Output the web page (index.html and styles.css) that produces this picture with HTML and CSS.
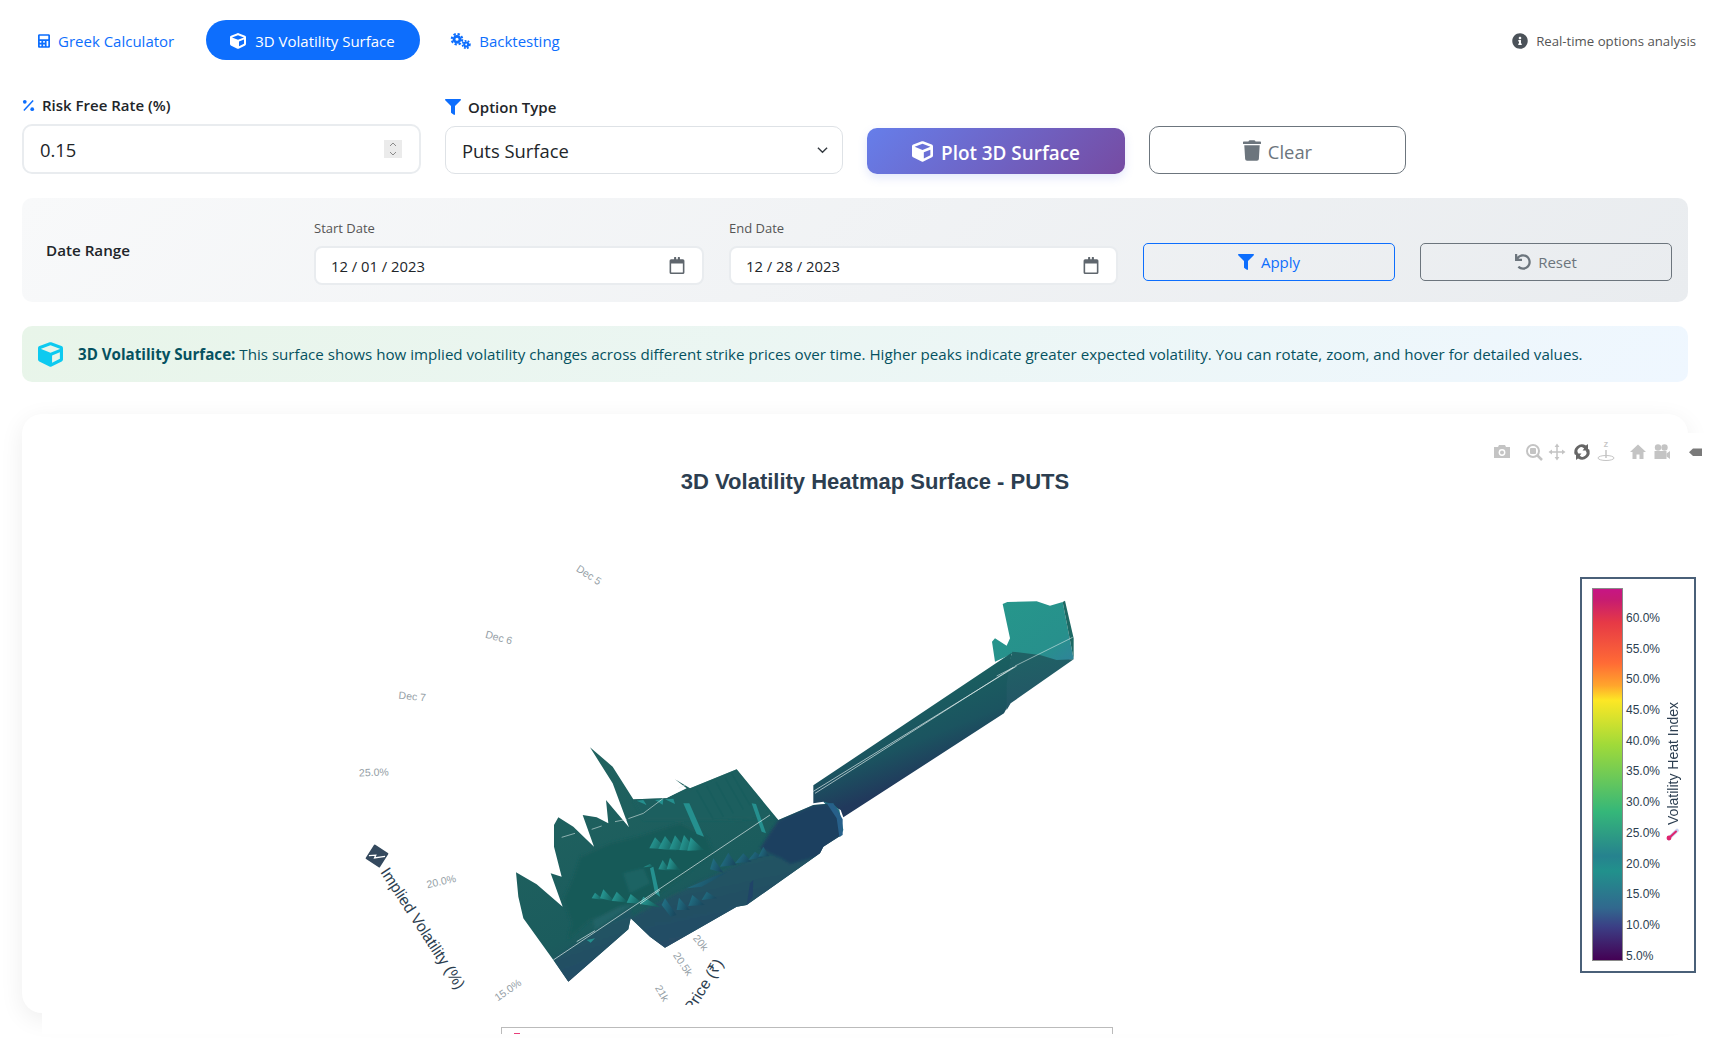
FILE: index.html
```html
<!DOCTYPE html>
<html lang="en">
<head>
<meta charset="utf-8">
<title>3D Volatility Surface</title>
<link rel="stylesheet" href="styles.css">
</head>
<body>
<svg class="defs" width="0" height="0" aria-hidden="true">
  <defs>
    <symbol id="i-cube" viewBox="0 0 512 512"><path d="M239.1 6.3l-208 78c-18.7 7-31.1 25-31.1 45v225.1c0 18.2 10.3 34.8 26.5 42.9l208 104c13.5 6.8 29.4 6.8 42.9 0l208-104c16.3-8.1 26.5-24.8 26.5-42.9V129.3c0-20-12.4-37.9-31.1-44.9l-208-78C262 2.2 250 2.2 239.1 6.3zM256 68.4l192 72v1.1l-192 78-192-78v-1.1l192-72zm32 356V275.5l160-65v133.9l-160 80z"/></symbol>
    <symbol id="i-filter" viewBox="0 0 512 512"><path d="M487.976 0H24.028C2.71 0-8.047 25.866 7.058 40.971L192 225.941V432c0 7.831 3.821 15.17 10.237 19.662l80 55.98C298.02 518.69 320 507.493 320 487.98V225.941l184.947-184.97C520.021 25.896 509.338 0 487.976 0z"/></symbol>
    <symbol id="i-calendar" viewBox="0 0 448 512"><path d="M148 0h40a12 12 0 0 1 12 12v52h48V12a12 12 0 0 1 12-12h40a12 12 0 0 1 12 12v52h88a48 48 0 0 1 48 48v352a48 48 0 0 1-48 48H48a48 48 0 0 1-48-48V112a48 48 0 0 1 48-48h88V12a12 12 0 0 1 12-12zM48 192v256a16 16 0 0 0 16 16h320a16 16 0 0 0 16-16V192z"/></symbol>
  </defs>
</svg>
<main class="page">
  <header class="topbar">
    <nav class="tabs">
      <a class="tab">
        <svg class="tab-icon calc" viewBox="0 0 448 512"><path d="M400 0H48C22.4 0 0 22.4 0 48v416c0 25.6 22.4 48 48 48h352c25.6 0 48-22.4 48-48V48c0-25.6-22.4-48-48-48zM128 435.2c0 6.4-6.4 12.8-12.8 12.8H76.8c-6.4 0-12.8-6.4-12.8-12.8v-38.4c0-6.4 6.4-12.8 12.8-12.8h38.4c6.4 0 12.8 6.4 12.8 12.8v38.4zm0-128c0 6.4-6.4 12.8-12.8 12.8H76.8c-6.4 0-12.8-6.4-12.8-12.8v-38.4c0-6.4 6.4-12.8 12.8-12.8h38.4c6.4 0 12.8 6.4 12.8 12.8v38.4zm128 128c0 6.4-6.4 12.8-12.8 12.8h-38.4c-6.4 0-12.8-6.4-12.8-12.8v-38.4c0-6.4 6.4-12.8 12.8-12.8h38.4c6.4 0 12.8 6.4 12.8 12.8v38.4zm0-128c0 6.4-6.4 12.8-12.8 12.8h-38.4c-6.4 0-12.8-6.4-12.8-12.8v-38.4c0-6.4 6.4-12.8 12.8-12.8h38.4c6.4 0 12.8 6.4 12.8 12.8v38.4zm128 128c0 6.4-6.4 12.8-12.8 12.8h-38.4c-6.4 0-12.8-6.4-12.8-12.8V268.8c0-6.4 6.4-12.8 12.8-12.8h38.4c6.4 0 12.8 6.4 12.8 12.8v166.4zm0-256c0 6.4-6.4 12.8-12.8 12.8H76.8c-6.4 0-12.8-6.4-12.8-12.8V76.8C64 70.4 70.4 64 76.8 64h294.4c6.4 0 12.8 6.4 12.8 12.8v102.4z"/></svg>
        Greek Calculator
      </a>
      <a class="tab tab-active">
        <svg class="tab-icon"><use href="#i-cube"/></svg>
        3D Volatility Surface
      </a>
      <a class="tab">
        <svg class="tab-icon gears" viewBox="0 0 24 18">
          <g class="gear-big"><circle cx="8" cy="7" r="3.4"/><circle class="teeth" cx="8" cy="7" r="6"/></g>
          <g class="gear-small"><circle cx="18.5" cy="13" r="2.3"/><circle class="teeth-s" cx="18.5" cy="13" r="4.2"/></g>
        </svg>
        Backtesting
      </a>
    </nav>
    <p class="status">
      <svg class="status-icon" viewBox="0 0 512 512"><path d="M256 8C119 8 8 119.083 8 256c0 136.997 111 248 248 248s248-111.003 248-248C504 119.083 393 8 256 8zm0 110c23.196 0 42 18.804 42 42s-18.804 42-42 42-42-18.804-42-42 18.804-42 42-42zm56 254c0 6.627-5.373 12-12 12h-88c-6.627 0-12-5.373-12-12v-24c0-6.627 5.373-12 12-12h12v-64h-12c-6.627 0-12-5.373-12-12v-24c0-6.627 5.373-12 12-12h64c6.627 0 12 5.373 12 12v100h12c6.627 0 12 5.373 12 12v24z"/></svg>
      Real-time options analysis
    </p>
  </header>

  <section class="controls">
    <div class="field">
      <label class="field-label">
        <svg class="pct-icon" viewBox="0 0 14 14"><path d="M2 12.5 12 1.5" /><circle cx="3" cy="3" r="2"/><circle cx="11" cy="11" r="2"/></svg>
        Risk Free Rate (%)
      </label>
      <div class="input-box input-risk">
        <span>0.15</span>
        <span class="spinner">
          <svg viewBox="0 0 10 18"><path d="M2 6 5 3l3 3M2 12l3 3 3-3"/></svg>
        </span>
      </div>
    </div>
    <div class="field">
      <label class="field-label">
        <svg class="filter-icon"><use href="#i-filter"/></svg>
        Option Type
      </label>
      <div class="input-box input-select">
        <span>Puts Surface</span>
        <svg class="chevron" viewBox="0 0 12 8"><path d="M1 1.5 6 6.5l5-5"/></svg>
      </div>
    </div>
    <button class="btn-plot">
      <svg class="btn-icon"><use href="#i-cube"/></svg>
      <span>Plot 3D Surface</span>
    </button>
    <button class="btn-clear">
      <svg class="btn-icon trash" viewBox="0 0 448 512"><path d="M432 32H312l-9.4-18.7A24 24 0 0 0 281.1 0H166.8a23.72 23.72 0 0 0-21.4 13.3L136 32H16A16 16 0 0 0 0 48v32a16 16 0 0 0 16 16h416a16 16 0 0 0 16-16V48a16 16 0 0 0-16-16zM53.2 467a48 48 0 0 0 47.9 45h245.8a48 48 0 0 0 47.9-45L416 128H32z"/></svg>
      <span>Clear</span>
    </button>
  </section>

  <section class="date-panel">
    <strong class="date-title">Date Range</strong>
    <div class="date-field">
      <span class="date-label">Start Date</span>
      <div class="date-input"><span>12 / 01 / 2023</span><svg class="cal"><use href="#i-calendar"/></svg></div>
    </div>
    <div class="date-field">
      <span class="date-label">End Date</span>
      <div class="date-input"><span>12 / 28 / 2023</span><svg class="cal"><use href="#i-calendar"/></svg></div>
    </div>
    <button class="btn-small btn-apply"><svg class="small-icon"><use href="#i-filter"/></svg>Apply</button>
    <button class="btn-small btn-reset">
      <svg class="small-icon" viewBox="0 0 512 512"><path d="M212.333 224.333H12c-6.627 0-12-5.373-12-12V12C0 5.373 5.373 0 12 0h48c6.627 0 12 5.373 12 12v78.112C117.773 39.279 184.26 7.47 258.175 8.007c136.906.994 246.448 111.623 246.157 248.532C504.041 393.258 393.12 504 256.333 504c-64.089 0-122.496-24.313-166.51-64.215-5.099-4.622-5.334-12.554-.467-17.42l33.967-33.967c4.474-4.474 11.662-4.717 16.401-.525C170.76 415.336 211.58 432 256.333 432c97.268 0 176-78.716 176-176 0-97.267-78.716-176-176-176-58.496 0-110.28 28.476-142.274 72.333h98.274c6.627 0 12 5.373 12 12v48c0 6.627-5.373 12-12 12z"/></svg>
      Reset
    </button>
  </section>

  <section class="info">
    <svg class="info-icon"><use href="#i-cube"/></svg>
    <p><strong>3D Volatility Surface:</strong> This surface shows how implied volatility changes across different strike prices over time. Higher peaks indicate greater expected volatility. You can rotate, zoom, and hover for detailed values.</p>
  </section>

  <section class="card"></section>

  <div class="plot">
    <svg class="scene" viewBox="42 433 1670 572" width="1670" height="572">
      <defs>
        <linearGradient id="g-body" x1="0.15" y1="0.1" x2="0.75" y2="1">
          <stop offset="0" stop-color="#20625f"/><stop offset=".55" stop-color="#1b5c5d"/><stop offset="1" stop-color="#24405f"/>
        </linearGradient>
        <linearGradient id="g-under" x1="0" y1="0" x2="0.35" y2="1">
          <stop offset="0" stop-color="#1b5a60"/><stop offset="1" stop-color="#264a66"/>
        </linearGradient>
        <linearGradient id="g-shaft" x1="0.42" y1="0.3" x2="0.62" y2="0.72">
          <stop offset="0" stop-color="#1a5f60"/><stop offset=".55" stop-color="#1b5460"/><stop offset="1" stop-color="#21395c"/>
        </linearGradient>
        <linearGradient id="g-section" x1="0.2" y1="0" x2="0.5" y2="1">
          <stop offset="0" stop-color="#1f6365"/><stop offset="1" stop-color="#245466"/>
        </linearGradient>
        <linearGradient id="g-head" x1="0" y1="0" x2="1" y2="1">
          <stop offset="0" stop-color="#26978b"/><stop offset=".72" stop-color="#27908c"/><stop offset="1" stop-color="#30839a"/>
        </linearGradient>
        <linearGradient id="g-tooth" x1="0" y1="0" x2="1" y2="0.3">
          <stop offset="0" stop-color="#2ba5a0"/><stop offset="1" stop-color="#15615f"/>
        </linearGradient>
        <linearGradient id="g-tooth-blue" x1="0" y1="0" x2="1" y2="0.3">
          <stop offset="0" stop-color="#22768a"/><stop offset="1" stop-color="#1a4a60"/>
        </linearGradient>
        <filter id="soft" x="-10%" y="-10%" width="120%" height="120%"><feGaussianBlur stdDeviation="5"/></filter>
        <clipPath id="body-clip">
          <polygon points="108,457 170,493 248,560 212,460 245,470 222,380 222,315 235,292 280,320 342,380 308,285 350,292 385,310 378,240 447,322 398,190 330,82 398,140 460,238 560,235 620,205 585,178 630,205 770,148 895,300 1000,255 1060,250 1085,300 1085,345 1030,380 1020,400 800,555 770,560 555,683 510,650 452,595 445,628 265,785 220,720 130,595 115,530"/>
        </clipPath>
      </defs>

      <!-- far end of the surface, zoomed coordinates at 3x -->
      <g transform="translate(780 580) scale(.33333)">
        <polygon fill="url(#g-head)" points="668,72 682,66 770,64 810,77 848,66 881,238 830,245 780,232 700,220 645,245 636,185 645,175 680,197 690,175"/>
        <polygon fill="#1d6863" points="848,66 855,62 881,175 881,238 868,170"/>
        <polygon fill="url(#g-section)" points="697,215 780,225 830,240 881,238 692,370 680,390 665,320"/>
        <polygon fill="url(#g-shaft)" points="100,616 695,218 680,312 680,385 672,400 190,712 182,690 130,665 100,670"/>
        <polygon fill="#1f6f80" points="130,665 160,672 178,690 190,750 180,772 160,700"/>
      </g>

      <!-- near part of the surface -->
      <g transform="translate(480 720) scale(.33333)">
        <polygon fill="url(#g-body)" points="108,457 170,493 248,560 212,460 245,470 222,380 222,315 235,292 280,320 342,380 308,285 350,292 385,310 378,240 447,322 398,190 330,82 398,140 460,238 560,235 620,205 585,178 630,205 770,148 895,300 1000,255 1060,250 1085,300 1085,345 1030,380 1020,400 800,555 770,560 555,683 510,650 452,595 445,628 265,785 220,720 130,595 115,530"/>
        <g clip-path="url(#body-clip)">
          <g filter="url(#soft)">
            <polygon fill="#1a5f5e" points="460,240 620,210 770,148 880,295 700,300 620,300 490,300"/>
            <polygon fill="#155a59" points="280,470 300,410 390,370 470,350 600,310 680,350 700,400 540,520 330,600 262,660 275,610 250,540"/>
            <polygon fill="#1f6363" points="430,460 490,445 510,490 450,520"/>
            <polygon fill="#246468" points="340,600 420,560 460,550 345,630"/>
            <polygon fill="url(#g-under)" points="220,720 450,565 460,600 445,640 265,800"/>
            <polygon fill="url(#g-under)" points="452,595 540,545 800,420 1020,340 1040,380 1030,410 800,570 770,575 555,700 500,650"/>
            <polygon fill="#1f3f60" points="895,300 1000,255 1045,250 1090,300 1090,345 1040,380 1030,405 930,432 905,415 880,405 840,385"/>
          </g>
        </g>
        <polygon fill="#204468" points="810,490 820,480 818,530 800,555"/>
        <polygon fill="#27608a" points="1040,250 1060,250 1088,298 1088,345 1078,350 1070,295"/>
        <!-- ribbed block -->
        <g class="ribs">
          <path d="M650 210 700 298M680 198 730 290M708 186 760 280M735 172 790 268M755 160 810 255"/>
        </g>
        <!-- teeth -->
        <g fill="url(#g-tooth)">
          <polygon points="525,352 560,388 508,385"/><polygon points="555,348 590,392 535,386"/><polygon points="585,346 622,392 568,388"/><polygon points="612,345 650,392 598,390"/><polygon points="632,352 672,390 622,392"/>
          <polygon points="548,420 570,452 535,448"/><polygon points="570,413 600,450 560,448"/>
          <polygon points="510,432 520,440 490,442"/>
          <polygon points="345,518 372,540 335,535"/><polygon points="370,508 405,545 360,535"/><polygon points="410,515 445,548 395,542"/><polygon points="452,522 490,552 440,548"/><polygon points="490,530 540,562 480,552"/>
        </g>
        <g fill="url(#g-tooth-blue)">
          <polygon points="555,535 590,585 572,590 545,555"/><polygon points="597,533 630,570 590,570"/><polygon points="637,525 675,555 625,558"/><polygon points="680,515 712,535 665,540"/>
          <polygon points="700,415 730,458 690,448"/><polygon points="745,398 770,435 720,440"/><polygon points="790,400 815,425 765,430"/><polygon points="825,395 848,412 805,420"/><polygon points="850,380 868,408 835,410"/>
          <polygon points="620,505 700,470 745,455 665,500"/>
        </g>
        <g fill="#25908f">
          <polygon points="510,445 520,440 540,530 525,520"/>
          <polygon points="610,250 628,250 672,350 650,342"/>
          <polygon points="815,250 828,252 858,340 845,335"/>
          <polygon points="470,242 500,255 490,240"/><polygon points="525,240 548,254 550,238"/><polygon points="555,238 585,252 580,236"/>
          <polygon points="320,660 345,655 332,668"/>
        </g>
        <!-- wireframe lines -->
        <g class="wire">
          <path d="M220 720 870 285"/>
          <path d="M290 665 345 632M480 552 540 510"/>
          <path class="thin" d="M245 352 285 340M335 328 365 318M405 305 440 298M445 296 490 280M490 280 550 235M595 205 615 195"/>
        </g>
      </g>
      <g transform="translate(780 580) scale(.33333)">
        <g class="wire">
          <path d="M100 634 710 258"/>
          <path d="M105 640 700 262"/>
          <path class="thin" d="M650 288 705 260"/>
          <path class="thin" d="M705 258 878 172"/>
        </g>
      </g>

      <!-- axis ticks -->
      <g class="ticks">
        <text transform="translate(587 578) rotate(33)">Dec 5</text>
        <text transform="translate(498 641) rotate(15)">Dec 6</text>
        <text transform="translate(412 700) rotate(5)">Dec 7</text>
        <text transform="translate(374 776) rotate(-2)">25.0%</text>
        <text transform="translate(442 885) rotate(-13)">20.0%</text>
        <text transform="translate(510 993) rotate(-35)">15.0%</text>
        <text transform="translate(698 945) rotate(50)">20k</text>
        <text transform="translate(680 966) rotate(56)">20.5k</text>
        <text transform="translate(659 995) rotate(60)">21k</text>
      </g>

      <!-- axis titles -->
      <text class="axis-title" transform="translate(380 872) rotate(57)">Implied Volatility (%)</text>
      <g transform="translate(377 856) rotate(33)">
        <rect x="-8.500" y="-8.500" width="17" height="17" rx="1" fill="#34495e"/>
        <path d="M-7 4-1.500 0-1 3 7-4" fill="none" stroke="#fff" stroke-width="1.300"/>
      </g>
      <text class="axis-title" text-anchor="end" transform="translate(724 963) rotate(-58)">Strike Price (₹)</text>

      <!-- chart title -->
      <text class="chart-title" x="875" y="489" text-anchor="middle">3D Volatility Heatmap Surface - PUTS</text>

      <!-- modebar -->
      <g class="modebar">
        <g transform="translate(1502 452)"><path d="M-8 -5h4l1-2h6l1 2h4v11h-16z"/><circle r="3.400" cy="0.500" fill="#fff"/><circle r="2" cy="0.500"/></g>
        <g transform="translate(1533 451)"><circle r="6" class="ring"/><rect x="-3" y="-3" width="6" height="6" rx="1"/><path class="line" d="M4 4 9 9"/></g>
        <g transform="translate(1557 452)"><path class="line2" d="M-7 0H7M0-7V7"/><path d="M0-8.500 2.400-5H-2.400zM0 8.500 2.400 5H-2.400zM-8.500 0-5 2.400V-2.400zM8.500 0 5 2.400V-2.400z"/></g>
        <g transform="translate(1582 452)" class="mode-dark"><path d="M-7 3A7.600 7.600 0 0 1 4-6.500L6-8V-1.500H0.500L2.200-3.400A3.500 3.500 0 0 0-3.500 1.500z"/><path d="M7 -3A7.600 7.600 0 0 1-4 6.500L-6 8V1.500H-0.500L-2.200 3.400A3.500 3.500 0 0 0 3.500-1.500z"/></g>
        <g transform="translate(1606 452)"><text class="mode-z" y="-5" text-anchor="middle">Z</text><path class="line2" d="M0-2V6"/><ellipse class="ring thin-ring" cy="6" rx="8" ry="2.500"/></g>
        <g transform="translate(1638 452)"><path d="M0-7.500-8 0H-5.500V7H-1.500V2.500H1.500V7H5.500V0H8z"/></g>
        <g transform="translate(1662 452)"><circle cx="-4" cy="-4.500" r="3.200"/><circle cx="2.500" cy="-4.500" r="3.200"/><rect x="-7.500" y="-1" width="12" height="8"/><path d="M4.500 1.500 8 -1V7L4.500 4.500z"/></g>
        <path class="mode-tag" d="M1693 448.500H1702V456H1693L1689 452.300z"/>
      </g>
    </svg>
    <div class="legend-strip"><span class="legend-dot"></span></div>

    <aside class="colorbar">
      <div class="bar"></div>
      <ul class="bar-ticks">
        <li>60.0%</li><li>55.0%</li><li>50.0%</li><li>45.0%</li><li>40.0%</li><li>35.0%</li>
        <li>30.0%</li><li>25.0%</li><li>20.0%</li><li>15.0%</li><li>10.0%</li><li>5.0%</li>
      </ul>
      <div class="bar-title">
        <svg class="thermo" viewBox="0 0 14 14"><path d="M2.500 11.500 11 3.500" stroke="#c8d0f0" stroke-width="3.600" stroke-linecap="round"/><path d="M2.500 11.500 10 4.500" stroke="#e0246e" stroke-width="2" stroke-linecap="round"/><circle cx="3" cy="11" r="2.400" fill="#e0246e"/></svg>
        <span>Volatility Heat Index</span>
      </div>
    </aside>
  </div>
</main>
</body>
</html>
```

FILE: styles.css
```css
* { box-sizing: border-box; }
html, body { margin: 0; height: 100%; }
body {
  background: #fff;
  color: #212529;
  font-family: "Open Sans", "Noto Sans", sans-serif;
  overflow: hidden;
}
.defs { position: absolute; }
.page { position: relative; height: 1060px; padding: 20px 16px 0 22px; }

.topbar { display: flex; justify-content: space-between; align-items: center; height: 40px; }
.tabs { display: flex; align-items: center; }
.tab {
  display: flex; align-items: center; height: 40px;
  color: #0d6efd; font-size: 15px; border-radius: 20px;
  padding: 2px 24px 0 16px; gap: 8px;
}
.tab:nth-child(2) { margin-left: 8px; width: 214px; padding: 2px 0 0 24px; gap: 9px; }
.tab:nth-child(3) { margin-left: 6px; padding-left: 24px; gap: 8px; }
.tab-active { background: #0d6efd; color: #fff; }
.tab-icon { width: 16px; height: 16px; fill: currentColor; flex: none; }
.tab-icon.calc { width: 12px; }
.tab-icon.gears { width: 21px; }
.gear-big circle { fill: none; stroke: #0d6efd; stroke-width: 3.2; }
.gear-big .teeth { stroke-width: 2.4; stroke-dasharray: 2.6 2.1; }
.gear-small circle { fill: none; stroke: #0d6efd; stroke-width: 2.4; }
.gear-small .teeth-s { stroke-width: 2; stroke-dasharray: 2 1.5; }
.status { margin: 0; padding-top: 2px; display: flex; align-items: center; gap: 8px; color: #555; font-size: 13.200px; }
.status-icon { width: 16px; height: 16px; fill: #4b5259; }

.controls {
  display: grid;
  grid-template-columns: 399px 398px 258px 257px;
  column-gap: 24px;
  align-items: end;
  height: 114px;
  margin-bottom: 24px;
  padding-top: 20px;
}
.field { display: flex; flex-direction: column; }
.field-label { display: flex; align-items: center; gap: 7px; font-size: 15px; font-weight: 600; color: #212529; height: 20px; margin-bottom: 9px; }
.pct-icon { width: 13px; height: 13px; fill: #0d6efd; stroke: #0d6efd; stroke-width: 1.6; }
.pct-icon circle { stroke: none; }
.filter-icon { width: 16px; height: 16px; fill: #0d6efd; }
.input-box {
  display: flex; justify-content: space-between; align-items: center;
  background: #fff; font-size: 18.400px; color: #212529; padding: 0 14px 0 16px;
}
.input-box > span:first-child { padding-top: 1px; }
.input-risk { height: 50px; border: 2px solid #e9ecef; border-radius: 10px; padding-right: 17px; }
.input-select { height: 48px; border: 1px solid #dee2e6; border-radius: 10px; }
.spinner { display: flex; width: 18px; height: 18px; background: #ebebeb; }
.spinner svg { width: 100%; height: 100%; fill: none; stroke: #8a8a8a; stroke-width: 1; }
.chevron { width: 11px; height: 8px; fill: none; stroke: #343a40; stroke-width: 1.500; }

button { font-family: inherit; cursor: pointer; }
.btn-plot {
  display: flex; align-items: center; justify-content: center; gap: 8px;
  height: 46px;
  color: #fff; font-size: 18.900px; font-weight: 600;
  border: 0; border-radius: 10px;
  background: linear-gradient(135deg, #667eea, #764ba2);
  box-shadow: 0 4px 10px rgba(102, 126, 234, .18);
}
.btn-plot span { padding-top: 3px; }
.btn-clear {
  display: flex; align-items: center; justify-content: center; gap: 7px;
  height: 48px;
  color: #6c757d; font-size: 18.400px;
  background: #fff; border: 1px solid #6c757d; border-radius: 10px;
}
.btn-clear span { padding-top: 2px; }
.btn-icon { width: 21px; height: 21px; fill: currentColor; }
.btn-icon.trash { width: 18px; }

.date-panel {
  display: grid;
  grid-template-columns: 243px 390px 389px 252px 252px;
  column-gap: 25px;
  align-items: end;
  height: 104px;
  padding: 0 16px 17px 24px;
  border-radius: 10px;
  background: linear-gradient(135deg, #f8f9fa, #e9ecef);
  width: 1666px;
}
.date-title { align-self: center; font-size: 15.200px; font-weight: 600; margin-top: 17px; }
.date-field { display: flex; flex-direction: column; gap: 9px; }
.date-label { font-size: 13px; color: #555; line-height: 18px; }
.date-input {
  display: flex; justify-content: space-between; align-items: center;
  height: 39px; padding: 0 17px 0 15px;
  background: #fff; border: 2px solid #e9ecef; border-radius: 8px;
  font-size: 14.800px; color: #212529;
}
.cal { width: 16px; height: 17px; fill: #5f666d; }
.btn-small {
  display: flex; align-items: center; justify-content: center; gap: 7px;
  height: 38px; margin-bottom: 4px;
  background: transparent; border-radius: 5px; font-size: 15px;
}
.small-icon { width: 16px; height: 16px; fill: currentColor; }
.btn-apply { color: #0d6efd; border: 1px solid #0d6efd; }
.btn-reset { color: #6c757d; border: 1px solid #6c757d; }

.info {
  display: flex; align-items: center; gap: 15px;
  width: 1666px; height: 56px; margin-top: 24px; padding: 0 16px;
  border-radius: 10px;
  background: linear-gradient(135deg, #e8f5e9, #eff7ff);
  color: #055160; font-size: 15.130px;
}
.info p { margin: 0; white-space: nowrap; }
.info strong { font-weight: 700; }
.info-icon { width: 25px; height: 25px; fill: #0dcaf0; flex: none; }

.card {
  width: 1666px; height: 599px; margin-top: 32px;
  background: #fff; border-radius: 20px;
  box-shadow: 0 6px 24px rgba(0, 0, 0, .07);
}

/* Chart sheet lying over the card */
.plot { position: absolute; left: 42px; top: 433px; width: 1670px; height: 601px; background: #fff; overflow: hidden; }
.scene { display: block; }
.ticks text { font: 10.500px "Liberation Sans", Arial, sans-serif; fill: #95a0a6; text-anchor: middle; }
.axis-title { font: 15.700px "Liberation Sans", Arial, sans-serif; fill: #2c3e50; }
.chart-title { font: 700 22px "Liberation Sans", Arial, sans-serif; fill: #2c3e50; }
.ribs path { fill: none; stroke: #155a5a; stroke-width: 5; opacity: .45; }
.wire path { fill: none; stroke: #e4efee; stroke-width: 2.400; opacity: .85; }
.wire path.thin { stroke-width: 2; }
.modebar { fill: #c4c4c4; }
.modebar .ring { fill: none; stroke: #c4c4c4; stroke-width: 2; }
.modebar .thin-ring { stroke-width: 1; }
.modebar .line { fill: none; stroke: #c4c4c4; stroke-width: 2.500; }
.modebar .line2 { fill: none; stroke: #c4c4c4; stroke-width: 1.500; }
.mode-dark { fill: #666; }
.mode-z { font: 700 7px "Liberation Sans", sans-serif; }
.mode-tag { fill: #7a7a7a; }

.legend-strip {
  position: absolute; left: 459px; top: 594px; width: 612px; height: 30px;
  border: 1px solid #bbb; border-bottom: 0;
}
.legend-dot { position: absolute; left: 12px; top: 5px; width: 6px; height: 2px; background: #e83e7a; }

.colorbar {
  position: absolute; left: 1538px; top: 144px; width: 116px; height: 396px;
  background: #fff; border: 2px solid #4a6078;
  font-family: "Liberation Sans", Arial, sans-serif; color: #2c3e50;
}
.bar {
  position: absolute; left: 10px; top: 9px; width: 31px; height: 373px;
  border: 1px solid #8a8a8a;
  background: linear-gradient(180deg, #c71585 0, #c71c70 3%, #e63946 9%, #ff6b35 20%, #ffa52c 26%, #fde725 30%, #a0da39 42%, #35b779 60%, #26828e 72%, #21918c 76%, #31688e 86%, #3b3f85 91%, #440154 100%);
}
.bar-ticks {
  position: absolute; left: 44px; top: 27px; margin: 0; padding: 0;
  list-style: none; font-size: 12px;
}
.bar-ticks li { height: 30.700px; line-height: 24px; }
.bar-title {
  position: absolute; left: 84px; top: 110px; width: 14px; height: 152px;
  display: flex; flex-direction: column-reverse; align-items: center; gap: 2px;
}
.bar-title span { writing-mode: vertical-rl; transform: rotate(180deg); font-size: 14px; line-height: 14px; white-space: nowrap; }
.thermo { width: 14px; height: 14px; flex: none; }
```
